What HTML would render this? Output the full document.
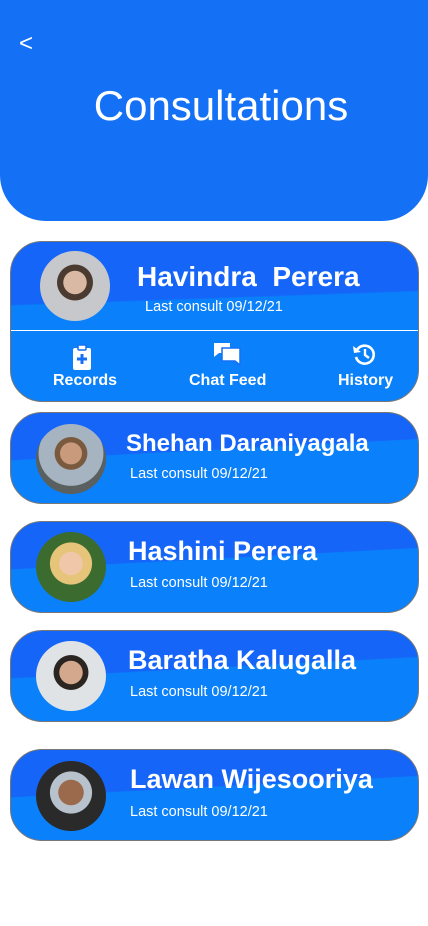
<!DOCTYPE html>
<html><head><meta charset="utf-8"><style>
*{margin:0;padding:0;box-sizing:border-box}
body{width:428px;height:926px;background:#fff;font-family:"Liberation Sans",sans-serif;position:relative;overflow:hidden;color:#fff}
.hdr{position:absolute;left:0;top:0;width:428px;height:221px;background:#1470f5;border-radius:0 0 46px 46px}
.back{position:absolute;left:19px;top:30px;font-size:24px}
.title{position:absolute;left:0;width:442px;text-align:center;top:82px;font-size:42px}
.card{position:absolute;left:10px;width:409px;border:1px solid #777;border-radius:32px;background:linear-gradient(177deg,#1565f9 0%,#1565f9 42%,#0a80fa 43%,#0a80fa 100%);overflow:hidden}
.av{position:absolute;width:70px;height:70px;border-radius:50%}
.nm{position:absolute;font-weight:bold;white-space:nowrap}
.sub{position:absolute;font-size:14.5px;white-space:nowrap}
.lbl{position:absolute;top:372px;font-size:16px;font-weight:bold}
</style></head><body>
<div class="hdr"><div class="back">&lt;</div><div class="title">Consultations</div></div>

<div class="card" style="top:241px;height:161px;background:linear-gradient(178deg,#1565f9 0%,#1565f9 36%,#0a80fa 37%)">
<div style="position:absolute;left:0;right:0;top:88px;height:1px;background:#fff"></div>
</div>
<div class="av" style="left:40px;top:251px;background:radial-gradient(circle at 50% 45%,#d9b9a4 0 22%,#4a3a30 23% 34%,#c7c8cc 35%)"></div>
<div class="nm" style="left:137px;top:261px;font-size:28px">Havindra&nbsp; Perera</div>
<div class="sub" style="left:145px;top:299px">Last consult 09/12/21</div>
<svg style="position:absolute;left:72px;top:344px" width="20" height="26" viewBox="0 0 20 26"><rect x="1" y="4" width="18" height="22" rx="2" fill="#fff"/><rect x="6" y="1" width="8" height="5" rx="1" fill="#fff" stroke="#1470f5" stroke-width="1.5"/><path d="M10 10v10M5 15h10" stroke="#1470f5" stroke-width="3"/></svg>
<svg style="position:absolute;left:213px;top:342px" width="28" height="24" viewBox="0 0 28 24"><path d="M1 1h16v10H6l-5 4z" fill="#fff"/><path d="M9 6h18v17l-5-4H9z" fill="#fff" stroke="#1470f5" stroke-width="1.5"/></svg>
<svg style="position:absolute;left:352px;top:342px" width="24" height="24" viewBox="0 0 24 24"><path d="M5 8A9 9 0 1 1 4 15" fill="none" stroke="#fff" stroke-width="2.6"/><path d="M1 4l1 7 7-1z" fill="#fff"/><path d="M13 7v6l4 3" fill="none" stroke="#fff" stroke-width="2.4"/></svg>
<div class="lbl" style="left:53px">Records</div>
<div class="lbl" style="left:189px">Chat Feed</div>
<div class="lbl" style="left:338px">History</div>

<div class="card" style="top:412px;height:92px"></div>
<div class="av" style="left:36px;top:424px;background:radial-gradient(circle at 50% 42%,#c99a7c 0 20%,#7a5a3e 21% 30%,#a6b3c0 31% 60%,#59605f 61%)"></div>
<div class="nm" style="left:126px;top:430px;font-size:24px">Shehan Daraniyagala</div>
<div class="sub" style="left:130px;top:466px">Last consult 09/12/21</div>

<div class="card" style="top:521px;height:92px"></div>
<div class="av" style="left:36px;top:532px;background:radial-gradient(circle at 50% 45%,#f0c7a8 0 22%,#e6c47a 23% 40%,#3b6b2e 41%)"></div>
<div class="nm" style="left:128px;top:536px;font-size:27px">Hashini Perera</div>
<div class="sub" style="left:130px;top:575px">Last consult 09/12/21</div>

<div class="card" style="top:630px;height:92px"></div>
<div class="av" style="left:36px;top:641px;background:radial-gradient(circle at 50% 45%,#d4a88c 0 22%,#2b2522 23% 33%,#dfe3e6 34%)"></div>
<div class="nm" style="left:128px;top:645px;font-size:27px">Baratha Kalugalla</div>
<div class="sub" style="left:130px;top:684px">Last consult 09/12/21</div>

<div class="card" style="top:749px;height:92px"></div>
<div class="av" style="left:36px;top:761px;background:radial-gradient(circle at 50% 45%,#9b6a4c 0 24%,#b8c2cc 25% 40%,#2a2a2a 41%)"></div>
<div class="nm" style="left:130px;top:764px;font-size:27px">Lawan Wijesooriya</div>
<div class="sub" style="left:130px;top:804px">Last consult 09/12/21</div>
</body></html>
